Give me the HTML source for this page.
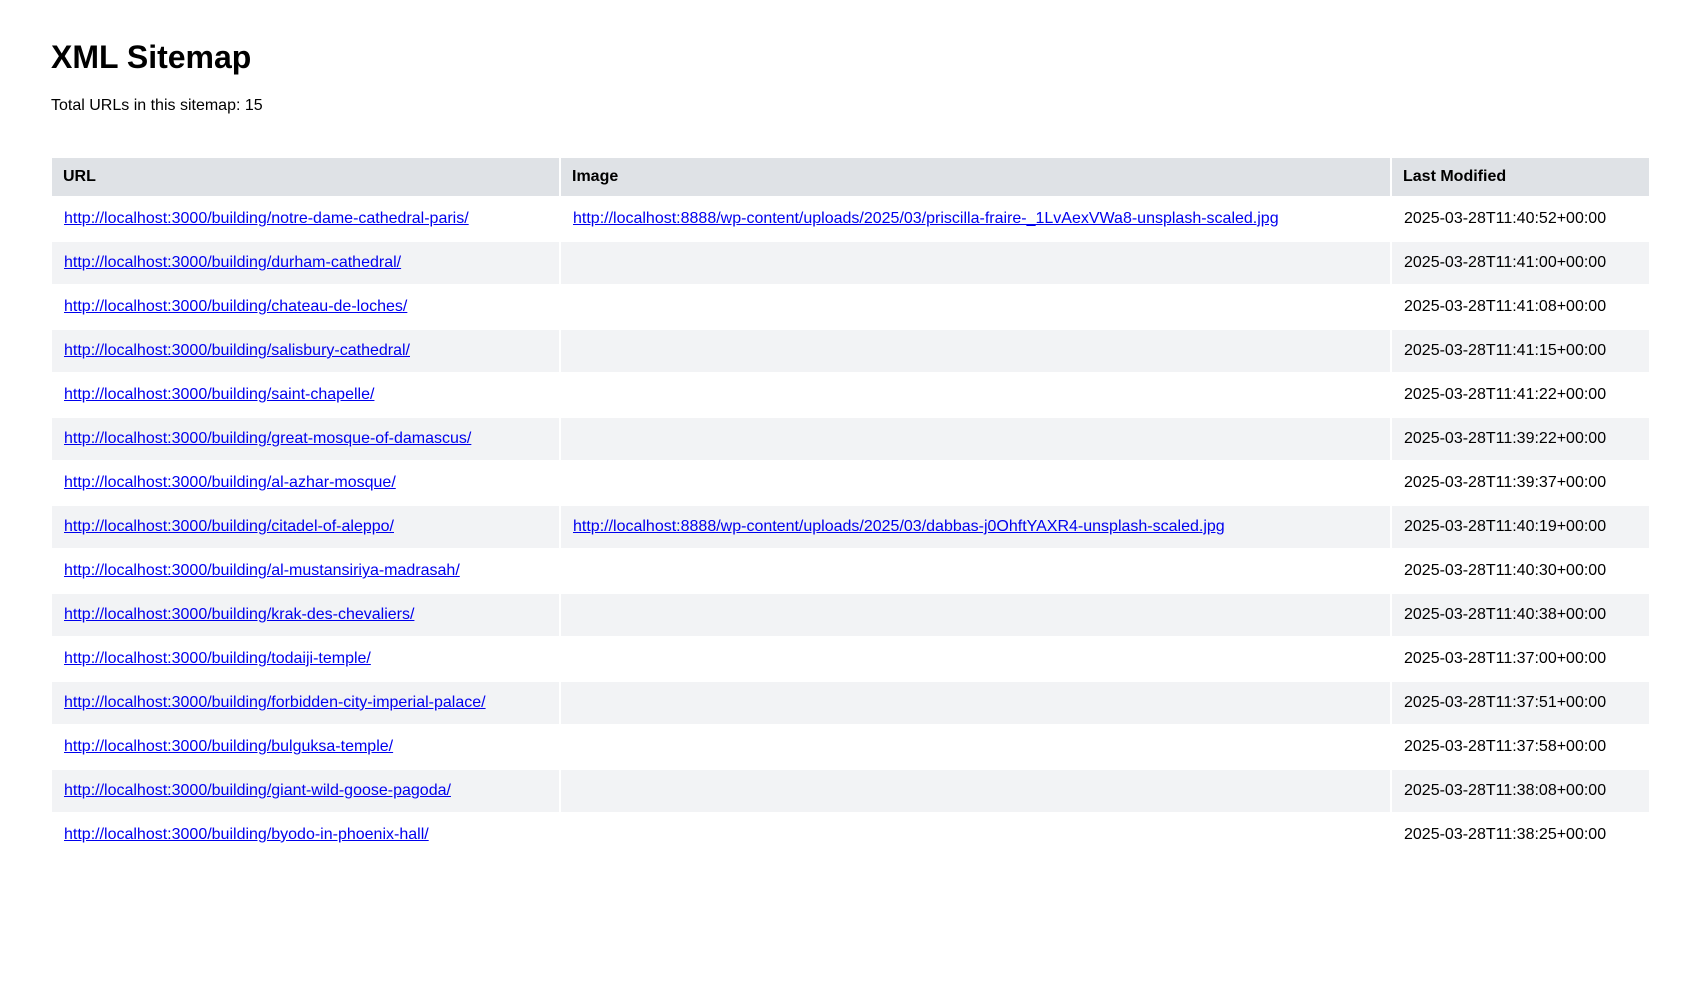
<!DOCTYPE html>
<html><head><meta charset="utf-8"><style>
body{margin:0;background:#fff;font-family:"Liberation Sans",Arial,sans-serif;color:#000;width:1700px;height:990px;overflow:hidden;position:relative}
h1{position:absolute;left:51px;top:38px;margin:0;font-size:32px;line-height:38px;font-weight:bold}
p{position:absolute;left:51px;top:97px;margin:0;font-size:16px;line-height:18px}
table{position:absolute;left:50px;top:156px;width:1601px;border-spacing:2px;font-size:16px}
th{background:#dfe2e6;text-align:left;padding:10px 11px;line-height:18px;font-weight:bold}
td{padding:12px 12px;line-height:18px;white-space:nowrap}
tr.e td{background:#f2f3f5}
a{color:#0000ee;text-decoration:underline}
</style></head><body>
<h1>XML Sitemap</h1>
<p>Total URLs in this sitemap: 15</p>
<table>
<colgroup><col style="width:507px"><col style="width:829px"><col></colgroup>
<tr><th>URL</th><th>Image</th><th>Last Modified</th></tr>
<tr><td><a>http://localhost:3000/building/notre-dame-cathedral-paris/</a></td><td><a>http://localhost:8888/wp-content/uploads/2025/03/priscilla-fraire-_1LvAexVWa8-unsplash-scaled.jpg</a></td><td>2025-03-28T11:40:52+00:00</td></tr>
<tr class="e"><td><a>http://localhost:3000/building/durham-cathedral/</a></td><td></td><td>2025-03-28T11:41:00+00:00</td></tr>
<tr><td><a>http://localhost:3000/building/chateau-de-loches/</a></td><td></td><td>2025-03-28T11:41:08+00:00</td></tr>
<tr class="e"><td><a>http://localhost:3000/building/salisbury-cathedral/</a></td><td></td><td>2025-03-28T11:41:15+00:00</td></tr>
<tr><td><a>http://localhost:3000/building/saint-chapelle/</a></td><td></td><td>2025-03-28T11:41:22+00:00</td></tr>
<tr class="e"><td><a>http://localhost:3000/building/great-mosque-of-damascus/</a></td><td></td><td>2025-03-28T11:39:22+00:00</td></tr>
<tr><td><a>http://localhost:3000/building/al-azhar-mosque/</a></td><td></td><td>2025-03-28T11:39:37+00:00</td></tr>
<tr class="e"><td><a>http://localhost:3000/building/citadel-of-aleppo/</a></td><td><a>http://localhost:8888/wp-content/uploads/2025/03/dabbas-j0OhftYAXR4-unsplash-scaled.jpg</a></td><td>2025-03-28T11:40:19+00:00</td></tr>
<tr><td><a>http://localhost:3000/building/al-mustansiriya-madrasah/</a></td><td></td><td>2025-03-28T11:40:30+00:00</td></tr>
<tr class="e"><td><a>http://localhost:3000/building/krak-des-chevaliers/</a></td><td></td><td>2025-03-28T11:40:38+00:00</td></tr>
<tr><td><a>http://localhost:3000/building/todaiji-temple/</a></td><td></td><td>2025-03-28T11:37:00+00:00</td></tr>
<tr class="e"><td><a>http://localhost:3000/building/forbidden-city-imperial-palace/</a></td><td></td><td>2025-03-28T11:37:51+00:00</td></tr>
<tr><td><a>http://localhost:3000/building/bulguksa-temple/</a></td><td></td><td>2025-03-28T11:37:58+00:00</td></tr>
<tr class="e"><td><a>http://localhost:3000/building/giant-wild-goose-pagoda/</a></td><td></td><td>2025-03-28T11:38:08+00:00</td></tr>
<tr><td><a>http://localhost:3000/building/byodo-in-phoenix-hall/</a></td><td></td><td>2025-03-28T11:38:25+00:00</td></tr>
</table>
</body></html>
